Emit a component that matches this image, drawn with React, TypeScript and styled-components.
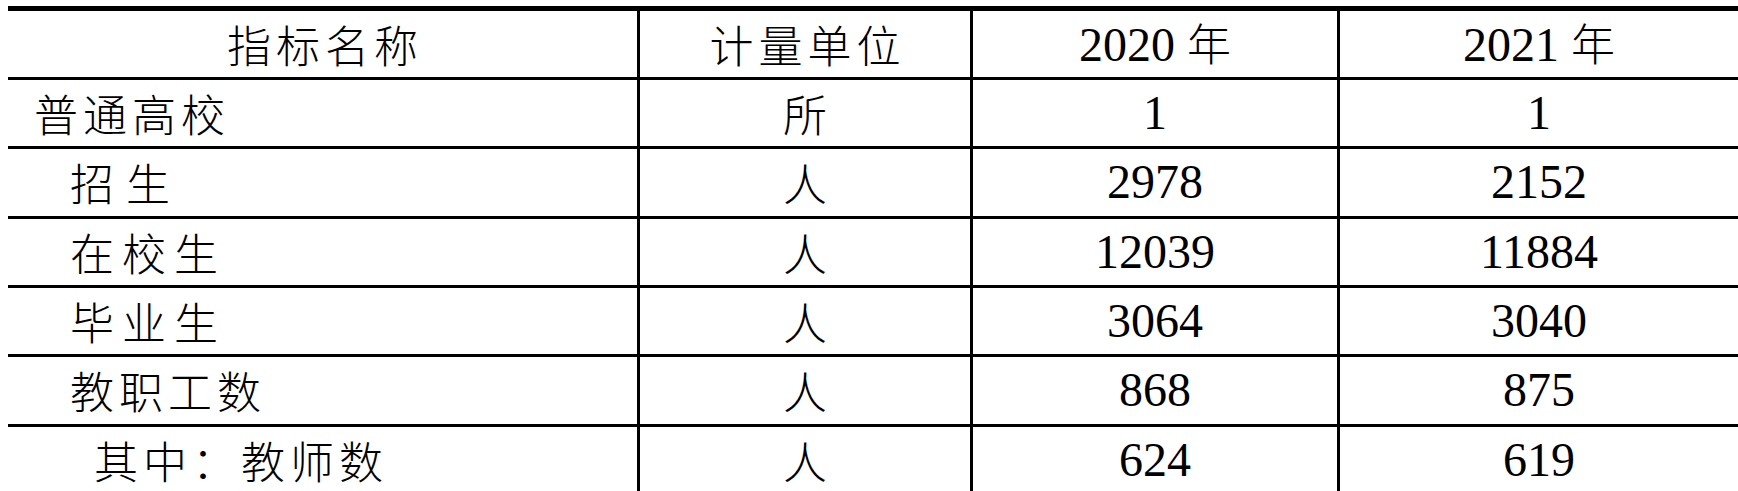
import styled, { createGlobalStyle } from 'styled-components';

const GlobalStyle = createGlobalStyle`
  html, body {
    margin: 0;
    padding: 0;
    background: #fff;
  }
  body {
    padding: 6px 0 0 8px;
    font-family: "Liberation Serif", "Noto Sans CJK SC", serif;
    color: #000;
  }
`;

type Row = {
  name: string;
  indent: number;
  spacing: number;
  unit: string;
  y2020: string;
  y2021: string;
};

const rows: Row[] = [
  { name: '普通高校', indent: 26, spacing: 5, unit: '所', y2020: '1', y2021: '1' },
  { name: '招生', indent: 62, spacing: 12, unit: '人', y2020: '2978', y2021: '2152' },
  { name: '在校生', indent: 62, spacing: 8, unit: '人', y2020: '12039', y2021: '11884' },
  { name: '毕业生', indent: 62, spacing: 8, unit: '人', y2020: '3064', y2021: '3040' },
  { name: '教职工数', indent: 62, spacing: 5, unit: '人', y2020: '868', y2021: '875' },
  { name: '其中：教师数', indent: 86, spacing: 5, unit: '人', y2020: '624', y2021: '619' },
];

const App = () => {
  return (
    <>
      <GlobalStyle />
      <Table>
        <Cell $head $center>
          <Label $spacing={5}>指标名称</Label>
        </Cell>
        <Cell $head $center $divider>
          <Label $spacing={5}>计量单位</Label>
        </Cell>
        <Cell $head $center $divider>
          <Num>2020 <Year>年</Year></Num>
        </Cell>
        <Cell $head $center $divider>
          <Num>2021 <Year>年</Year></Num>
        </Cell>

        {rows.map((row) => (
          <RowGroup key={row.name}>
            <Cell $indent={row.indent}>
              <Label $spacing={row.spacing}>{row.name}</Label>
            </Cell>
            <Cell $center $divider>
              <Label $spacing={0}>{row.unit}</Label>
            </Cell>
            <Cell $center $divider>
              <Num>{row.y2020}</Num>
            </Cell>
            <Cell $center $divider>
              <Num>{row.y2021}</Num>
            </Cell>
          </RowGroup>
        ))}
      </Table>
    </>
  );
};

const Table = styled.div`
  display: grid;
  grid-template-columns: 629px 333px 367px 401px;
  grid-template-rows: 71px;
  grid-auto-rows: 69.33px;
  width: 1730px;
`;

const RowGroup = styled.div`
  display: contents;
`;

const Cell = styled.div<{ $head?: boolean; $center?: boolean; $divider?: boolean; $indent?: number }>`
  box-sizing: border-box;
  display: flex;
  align-items: center;
  justify-content: ${(p) => (p.$center ? 'center' : 'flex-start')};
  padding-left: ${(p) => (p.$indent ? `${p.$indent}px` : '0')};
  border-top: ${(p) => (p.$head ? '5px' : '3px')} solid #000;
  border-left: ${(p) => (p.$divider ? '3px solid #000' : 'none')};
  overflow: hidden;
  white-space: nowrap;
`;

const Label = styled.span<{ $spacing: number }>`
  font-family: "Noto Sans CJK SC", sans-serif;
  font-size: 44px;
  font-weight: 300;
  line-height: 1;
  letter-spacing: ${(p) => p.$spacing}px;
  margin-right: ${(p) => -p.$spacing}px;
`;

const Num = styled.span`
  font-family: "Liberation Serif", "Noto Sans CJK SC", serif;
  font-size: 48px;
  line-height: 1;
`;

const Year = styled.span`
  font-family: "Noto Sans CJK SC", sans-serif;
  font-size: 44px;
  font-weight: 300;
`;

export default App;
